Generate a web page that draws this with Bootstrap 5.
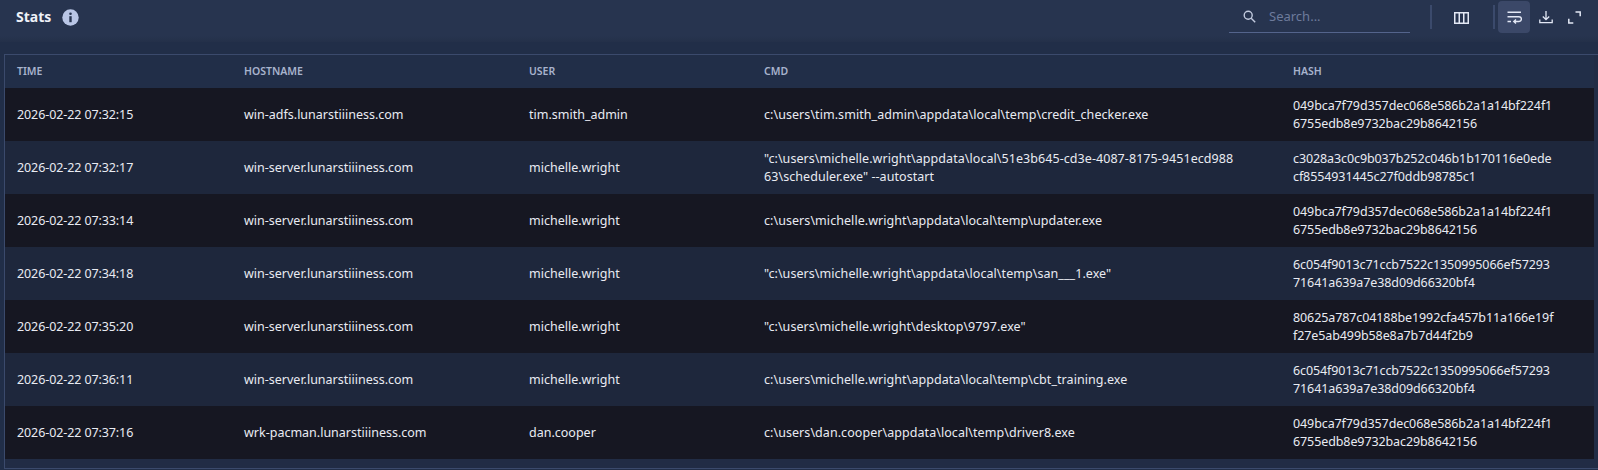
<!DOCTYPE html>
<html lang="en"><head><meta charset="utf-8"><title>Stats</title>
<link href="https://cdn.jsdelivr.net/npm/bootstrap@5.3.0/dist/css/bootstrap.min.css" rel="stylesheet">
<style>
html,body{height:470px;overflow:hidden}
body{background:#212e48;font-family:"Noto Sans",sans-serif;color:#e8eaf2}
.top-strip{height:42px;background:linear-gradient(#27344f 0,#27344f 36px,#243049 42px);padding:0 12px 8px 16px}
.stat-title{font-size:14px;font-weight:700;color:#eef1f8;margin:0}
.info-ico{width:17px;height:17px;margin-left:11px}
.search-box{width:181px;height:32px;border-bottom:1px solid #54648c;margin-right:20px;padding-left:14px}
.search-box input{background:transparent;border:0;outline:0;color:#fff;font-size:13px;width:130px;margin-left:13px;font-family:inherit;padding:0}
.search-box input::placeholder{color:#6d7b9c;opacity:1}
.vsep{width:2px;height:24px;background:#3b4a6c}
.tool-btn{width:32px;height:32px;border:0;background:transparent;padding:0;border-radius:4px;display:flex;align-items:center;justify-content:center;color:#e3e8f5}
.tool-btn.is-on{background:#3b4868;margin-left:3px}
.tool-btn.is-slim{width:24px}
.tool-mid{margin:1px 16px 0 13px}
.table-shell{margin:12px 0 0 4px;border:1px solid #3b4a6c;border-right:0;height:415px;background:#212c45}
.data-grid{table-layout:fixed;width:1589px;margin:0;--bs-table-bg:transparent;--bs-table-color:#e9ebf2;border-color:transparent}
.data-grid th{height:33px;padding:0 12px;vertical-align:middle;font-size:10.5px;font-weight:600;letter-spacing:0;color:#a8b3cd;background:#212e48;border:0}
.data-grid td{height:53px;padding:0 12px;vertical-align:middle;font-size:12.5px;line-height:18px;border:0;word-break:break-all}
.data-grid td.cell-num{letter-spacing:-.1px}
.data-grid td.cell-cmd{letter-spacing:.06px;padding-right:46px}
.data-grid td.cell-hash{letter-spacing:-.1px;padding-right:39px}
.data-grid tbody tr:nth-child(odd) td{background:#161722}
.data-grid tbody tr:nth-child(even) td{background:#1e273c}
</style></head>
<body>
<div class="top-strip d-flex align-items-center">
  <h1 class="stat-title">Stats</h1>
  <svg class="info-ico" viewBox="0 0 17 17"><circle cx="8.5" cy="8.5" r="8.2" fill="#b9c6e6"/><circle cx="8.5" cy="4.8" r="1.3" fill="#27344f"/><rect x="7.3" y="7.2" width="2.4" height="6" fill="#27344f"/></svg>
  <div class="ms-auto d-flex align-items-center">
    <div class="search-box d-flex align-items-center">
      <svg width="13" height="13" viewBox="0 0 13 13" fill="none" stroke="#c3cbdf" stroke-width="1.4"><circle cx="5.2" cy="5.2" r="4"/><path d="M8.2 8.2l4 4"/></svg>
      <input type="text" placeholder="Search...">
    </div>
    <div class="vsep"></div>
    <button class="tool-btn tool-mid" aria-label="Columns"><svg width="15" height="12" viewBox="0 0 15 12" fill="none" stroke="currentColor" stroke-width="1.5"><rect x=".75" y=".75" width="13.5" height="10.5"/><path d="M5.25 1v10M9.75 1v10"/></svg></button>
    <div class="vsep"></div>
    <button class="tool-btn is-on" aria-label="Wrap"><svg width="15" height="13" viewBox="0 0 15 13" fill="none" stroke="currentColor" stroke-width="1.4"><path d="M.5 1.2h13.5M.5 5.7h11.5a2.4 2.4 0 0 1 0 4.8H7M9 8.5l-2.2 2 2.2 2M.5 10.5h3.5"/></svg></button>
    <button class="tool-btn" aria-label="Download"><svg width="14" height="14" viewBox="0 0 14 14" fill="none" stroke="currentColor" stroke-width="1.3"><path d="M7 1v8.5M3.8 6.5L7 9.6l3.2-3.1M.8 9.5v3.2h12.4V9.5"/></svg></button>
    <button class="tool-btn is-slim" aria-label="Expand"><svg width="13" height="13" viewBox="0 0 13 13" fill="none" stroke="currentColor" stroke-width="1.5"><path d="M7.5 1h4.7v4.2M.8 7.8V12h4.5"/></svg></button>
  </div>
</div>
<div class="table-shell">
<table class="table data-grid">
<colgroup><col style="width:227px"><col style="width:285px"><col style="width:235px"><col style="width:529px"><col style="width:313px"></colgroup>
<thead><tr><th>TIME</th><th>HOSTNAME</th><th>USER</th><th>CMD</th><th>HASH</th></tr></thead>
<tbody>
<tr><td class="cell-num">2026-02-22 07:32:15</td><td>win-adfs.lunarstiiiness.com</td><td>tim.smith_admin</td><td class="cell-cmd">c:\users\tim.smith_admin\appdata\local\temp\credit_checker.exe</td><td class="cell-hash">049bca7f79d357dec068e586b2a1a14bf224f16755edb8e9732bac29b8642156</td></tr>
<tr><td class="cell-num">2026-02-22 07:32:17</td><td>win-server.lunarstiiiness.com</td><td>michelle.wright</td><td class="cell-cmd">"c:\users\michelle.wright\appdata\local\51e3b645-cd3e-4087-8175-9451ecd98863\scheduler.exe" --autostart</td><td class="cell-hash">c3028a3c0c9b037b252c046b1b170116e0edecf8554931445c27f0ddb98785c1</td></tr>
<tr><td class="cell-num">2026-02-22 07:33:14</td><td>win-server.lunarstiiiness.com</td><td>michelle.wright</td><td class="cell-cmd">c:\users\michelle.wright\appdata\local\temp\updater.exe</td><td class="cell-hash">049bca7f79d357dec068e586b2a1a14bf224f16755edb8e9732bac29b8642156</td></tr>
<tr><td class="cell-num">2026-02-22 07:34:18</td><td>win-server.lunarstiiiness.com</td><td>michelle.wright</td><td class="cell-cmd">"c:\users\michelle.wright\appdata\local\temp\san___1.exe"</td><td class="cell-hash">6c054f9013c71ccb7522c1350995066ef5729371641a639a7e38d09d66320bf4</td></tr>
<tr><td class="cell-num">2026-02-22 07:35:20</td><td>win-server.lunarstiiiness.com</td><td>michelle.wright</td><td class="cell-cmd">"c:\users\michelle.wright\desktop\9797.exe"</td><td class="cell-hash">80625a787c04188be1992cfa457b11a166e19ff27e5ab499b58e8a7b7d44f2b9</td></tr>
<tr><td class="cell-num">2026-02-22 07:36:11</td><td>win-server.lunarstiiiness.com</td><td>michelle.wright</td><td class="cell-cmd">c:\users\michelle.wright\appdata\local\temp\cbt_training.exe</td><td class="cell-hash">6c054f9013c71ccb7522c1350995066ef5729371641a639a7e38d09d66320bf4</td></tr>
<tr><td class="cell-num">2026-02-22 07:37:16</td><td>wrk-pacman.lunarstiiiness.com</td><td>dan.cooper</td><td class="cell-cmd">c:\users\dan.cooper\appdata\local\temp\driver8.exe</td><td class="cell-hash">049bca7f79d357dec068e586b2a1a14bf224f16755edb8e9732bac29b8642156</td></tr>
</tbody></table>
</div>
<script src="https://cdn.jsdelivr.net/npm/bootstrap@5.3.0/dist/js/bootstrap.bundle.min.js"></script>
</body></html>
